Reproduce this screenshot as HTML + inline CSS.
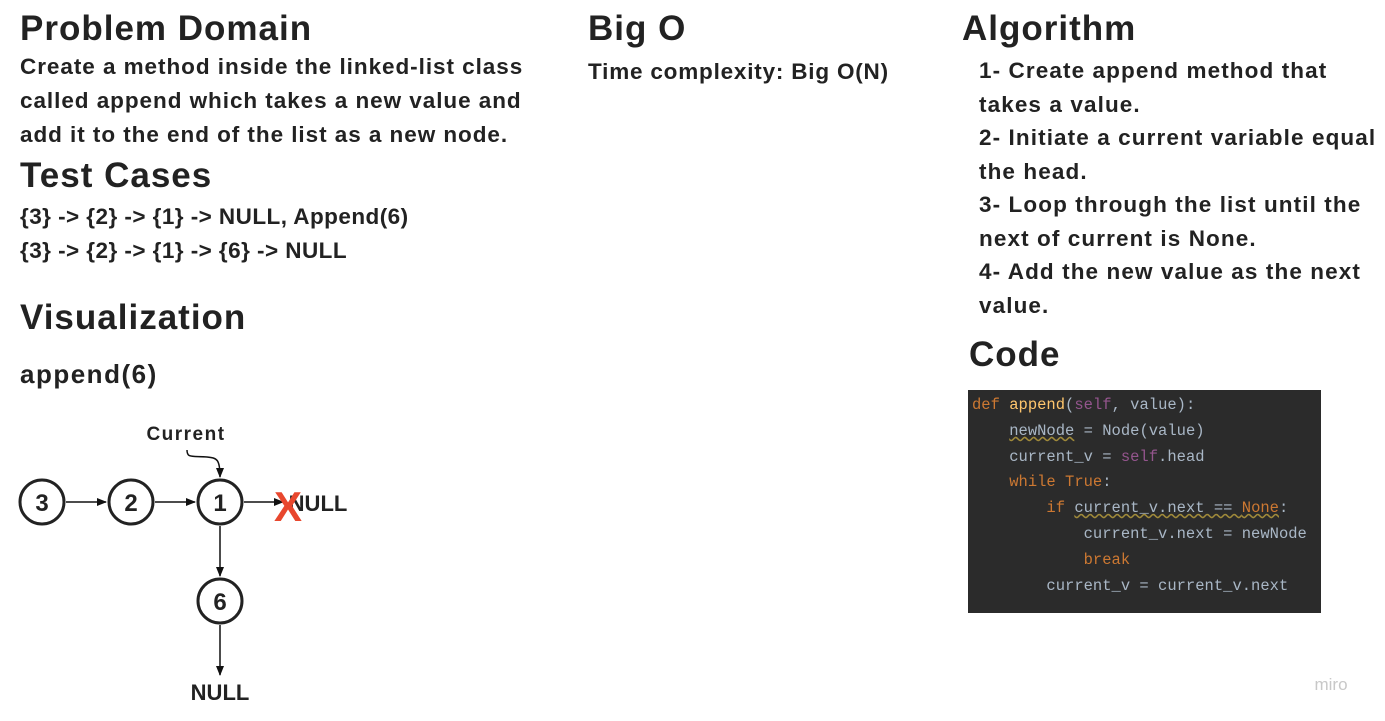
<!DOCTYPE html>
<html><head><style>
body{margin:0;width:1385px;height:721px;background:#fff;position:relative;font-family:"Liberation Sans","DejaVu Sans",sans-serif;color:#222;overflow:hidden}
.a{position:absolute;font-weight:bold;white-space:nowrap}
h1{position:absolute;margin:0;font-size:35px;font-weight:bold;white-space:nowrap;letter-spacing:1px}
.t{font-size:22.5px;line-height:34px}
.code{position:absolute;left:968px;top:390px;width:353px;height:223px;background:#2b2b2b;font-family:"Liberation Mono","DejaVu Sans Mono",monospace;font-size:15.5px;line-height:25.8px;color:#a9b7c6;white-space:pre;padding:3px 0 0 4px;box-sizing:border-box}
.k{color:#cc7832}.f{color:#ffc66d}.s{color:#94558d}.u{text-decoration:underline wavy #a08a3a}
</style></head><body>
<h1 style="left:20px;top:9px">Problem Domain</h1>
<div class="a t" style="left:20px;top:50px;letter-spacing:0.95px">Create a method inside the linked-list class<br>called append which takes a new value and<br>add it to the end of the list as a new node.</div>
<h1 style="left:20px;top:156px">Test Cases</h1>
<div class="a t" style="left:20px;top:200px;letter-spacing:0.45px">{3} -&gt; {2} -&gt; {1} -&gt; NULL, Append(6)<br>{3} -&gt; {2} -&gt; {1} -&gt; {6} -&gt; NULL</div>
<h1 style="left:20px;top:298px">Visualization</h1>
<div class="a" style="left:20px;top:359px;font-size:26px;letter-spacing:1.5px">append(6)</div>
<h1 style="left:588px;top:9px">Big O</h1>
<div class="a t" style="left:588px;top:55px;letter-spacing:0.8px">Time complexity: Big O(N)</div>
<h1 style="left:962px;top:9px">Algorithm</h1>
<div class="a t" style="left:979px;top:54px;line-height:33.5px;letter-spacing:1.1px">1- Create append method that<br>takes a value.<br>2- Initiate a current variable equal<br>the head.<br>3- Loop through the list until the<br>next of current is None.<br>4- Add the new value as the next<br>value.</div>
<h1 style="left:969px;top:335px">Code</h1>
<div class="code"><span class="k">def</span> <span class="f">append</span>(<span class="s">self</span>, value):
    <span class="u">newNode</span> = Node(value)
    current_v = <span class="s">self</span>.head
    <span class="k">while True</span>:
        <span class="k">if</span> <span class="u">current_v.next == <span class="k">None</span></span>:
            current_v.next = newNode
            <span class="k">break</span>
        current_v = current_v.next</div>
<svg style="position:absolute;left:0;top:0" width="1385" height="721">
<defs><marker id="m" markerWidth="10" markerHeight="8" refX="9" refY="4" orient="auto" markerUnits="userSpaceOnUse"><path d="M0,0L10,4L0,8z" fill="#111"/></marker></defs>
<g fill="none" stroke="#222" stroke-width="3">
<circle cx="42" cy="502" r="22"/><circle cx="131" cy="502" r="22"/><circle cx="220" cy="502" r="22"/><circle cx="220" cy="601" r="22"/></g>
<g stroke="#111" stroke-width="1.5" fill="none" marker-end="url(#m)">
<line x1="66" y1="502" x2="106" y2="502"/><line x1="155" y1="502" x2="195" y2="502"/><line x1="244" y1="502" x2="283" y2="502"/>
<line x1="220" y1="526" x2="220" y2="576"/><line x1="220" y1="625" x2="220" y2="675"/>
<path d="M187,450c0,8 4,6 20,7c10,1 13,2 13,20"/></g>
<g font-family="Liberation Sans,sans-serif" font-weight="bold" fill="#222" text-anchor="middle">
<text x="42" y="511" font-size="24">3</text><text x="131" y="511" font-size="24">2</text><text x="220" y="511" font-size="24">1</text><text x="220" y="610" font-size="24">6</text>
<text x="186" y="440" font-size="19" letter-spacing="1.5">Current</text>
<text x="318" y="511" font-size="22">NULL</text><text x="220" y="700" font-size="22">NULL</text>
<text x="288" y="521" font-size="42" fill="#e8472e">X</text>
<text x="1331" y="690" font-size="17" fill="#c8c8c8" font-weight="normal">miro</text>
</g></svg>
</body></html>
